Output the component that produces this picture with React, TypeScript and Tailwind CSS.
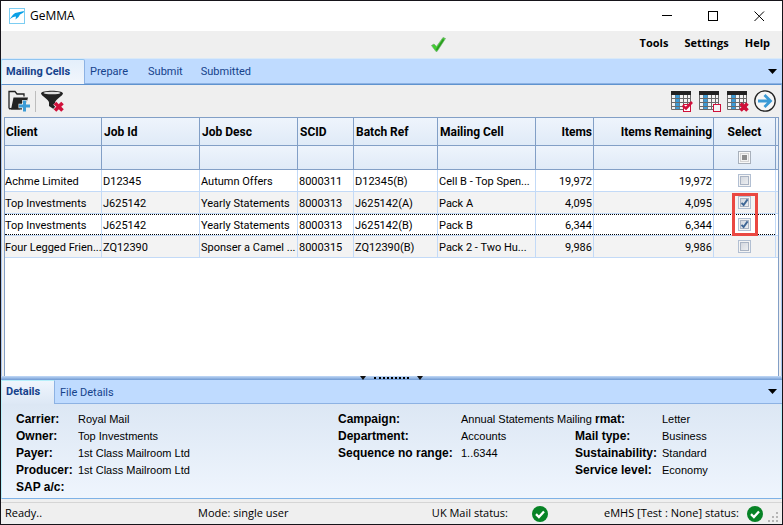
import React, { useState } from "react";

type Row = {
  client: string;
  jobId: string;
  desc: string;
  scid: string;
  batch: string;
  cell: string;
  items: string;
  remaining: string;
  selected: boolean;
};

const initialRows: Row[] = [
  { client: "Achme Limited", jobId: "D12345", desc: "Autumn Offers", scid: "8000311", batch: "D12345(B)", cell: "Cell B - Top Spen...", items: "19,972", remaining: "19,972", selected: false },
  { client: "Top Investments", jobId: "J625142", desc: "Yearly Statements", scid: "8000313", batch: "J625142(A)", cell: "Pack A", items: "4,095", remaining: "4,095", selected: true },
  { client: "Top Investments", jobId: "J625142", desc: "Yearly Statements", scid: "8000313", batch: "J625142(B)", cell: "Pack B", items: "6,344", remaining: "6,344", selected: true },
  { client: "Four Legged Frien...", jobId: "ZQ12390", desc: "Sponser a Camel ...", scid: "8000315", batch: "ZQ12390(B)", cell: "Pack 2 - Two Hu...", items: "9,986", remaining: "9,986", selected: false },
];

const columns = [
  { title: "Client", align: "text-left pl-px" },
  { title: "Job Id", align: "text-left pl-[2px]" },
  { title: "Job Desc", align: "text-left pl-[2px]" },
  { title: "SCID", align: "text-left pl-[2px]" },
  { title: "Batch Ref", align: "text-left pl-[2px]" },
  { title: "Mailing Cell", align: "text-left pl-[2px]" },
  { title: "Items", align: "text-right pr-px" },
  { title: "Items Remaining", align: "text-right pr-px" },
  { title: "Select", align: "text-center" },
];

const FOCUSED_ROW = 2;

function Tick({ className }: { className: string }) {
  return (
    <svg className={className} viewBox="0 0 13 13" fill="none" aria-hidden="true">
      <path d="M3.5 6.8 L5.6 9 L9.6 3.4" stroke="#3f6796" strokeWidth="1.9" />
    </svg>
  );
}

function GridCheck({ label, checked, onChange }: { label: string; checked: boolean; onChange: () => void }) {
  return (
    <span className="relative mx-auto block size-[13px]">
      <input
        type="checkbox"
        aria-label={label}
        checked={checked}
        onChange={onChange}
        className="block size-[13px] appearance-none border border-[#b2bfd2] bg-linear-to-br from-[#cdd2da] to-[#f3f4f6] shadow-[inset_0_0_0_1px_#f4f4f4,inset_0_0_0_2px_#a9b3c3]"
      />
      {checked && <Tick className="pointer-events-none absolute inset-0 size-[13px]" />}
    </span>
  );
}

function CalendarIcon({ mark }: { mark: "tick" | "box" | "cross" }) {
  return (
    <svg className="h-[22px] w-[23px]" viewBox="0 0 23 22" fill="none" aria-hidden="true">
      <rect x="0.5" y="1" width="20" height="19" fill="#f4f4f4" />
      <path d="M0.5 4V19.5H19.5V4M4.5 4V19M8.5 4V19M12.5 4V19M16.5 4V19M1 8.5H19M1 12.5H19M1 16.5H19" stroke="#6a6a6a" />
      <path d="M4.500 5h4v3h-4zM4.500 9h4v3h-4zM4.500 13h4v3h-4zM4.500 17h4v2h-4z" fill="#3c9bd6" />
      <rect x="0" y="1" width="20" height="4" fill="#222" />
      {mark === "tick" && (
        <>
          <rect x="12.5" y="14.5" width="7" height="7" fill="#fff" stroke="#d0103a" />
          <path d="M11.5 15.5L15 18.5L21 12" stroke="#d0103a" strokeWidth="2.6" />
        </>
      )}
      {mark === "box" && <rect x="14.5" y="14.5" width="7" height="7" fill="#f4f4f4" stroke="#d0103a" />}
      {mark === "cross" && <path d="M13.5 13.5L20.5 20.5M20.5 13.5L13.5 20.5" stroke="#d0103a" strokeWidth="3.6" />}
    </svg>
  );
}

function StatusOk() {
  return (
    <svg className="size-4 shrink-0" viewBox="0 0 16 16" fill="none" role="img" aria-label="OK">
      <circle cx="8" cy="8" r="8" fill="#078326" />
      <path d="M4 8.2L6.9 11L12 5.4" stroke="#fff" strokeWidth="2.3" />
    </svg>
  );
}

function TabMenuButton({ label }: { label: string }) {
  return (
    <button type="button" aria-label={label} className="mr-[5px] ml-auto self-center">
      <svg className="h-[5px] w-[9px]" viewBox="0 0 9 5" aria-hidden="true">
        <path d="M0 0H9L4.5 5Z" fill="#000" />
      </svg>
    </button>
  );
}

function Label({ children }: { children: React.ReactNode }) {
  return <dt className="text-[12px] font-bold leading-[17px]">{children}</dt>;
}

function Value({ children }: { children?: React.ReactNode }) {
  return <dd>{children}</dd>;
}

export default function App() {
  const [rows, setRows] = useState(initialRows);
  const toggle = (index: number) =>
    setRows(rows.map((row, i) => (i === index ? { ...row, selected: !row.selected } : row)));

  return (
    <div className="flex min-h-screen flex-col border border-[#16141a] bg-[#efefef] font-['Roboto',Arial,sans-serif] text-[11px] text-black">
      <header className="flex h-[30px] items-center bg-white pl-2 font-['Open_Sans','Segoe_UI',sans-serif]">
        <svg className="size-4" viewBox="0 0 16 16" aria-hidden="true">
          <rect x="0.5" y="0.5" width="15" height="15" fill="#fff" stroke="#7ccdf2" />
          <path d="M0.5 11.500C3.500 7.500 5 4.500 8.500 4.500L15 3L14.500 4.500L11 6.500L9.500 9L6.500 11.500L7 8.500C5 8.500 2.500 9.500 0.500 11.500Z" fill="#0aa0e6" />
        </svg>
        <h1 className="ml-[5px] text-[12px]">GeMMA</h1>
        <div className="ml-auto flex">
          <button type="button" aria-label="Minimise" className="flex h-[30px] w-[45px] items-center justify-center">
            <svg className="size-[11px]" viewBox="0 0 11 11" stroke="#000" aria-hidden="true"><path d="M0 4.500H10" /></svg>
          </button>
          <button type="button" aria-label="Maximise" className="flex h-[30px] w-[46px] items-center justify-center">
            <svg className="size-[11px]" viewBox="0 0 11 11" fill="none" stroke="#000" aria-hidden="true"><rect x="0.5" y="0.5" width="9" height="9" /></svg>
          </button>
          <button type="button" aria-label="Close" className="flex h-[30px] w-[46px] items-center justify-center">
            <svg className="size-[11px]" viewBox="0 0 11 11" stroke="#000" aria-hidden="true"><path d="M0.500 0.500L10 10M10 0.500L0.500 10" /></svg>
          </button>
        </div>
      </header>

      <div className="flex h-[27px] items-center font-['Open_Sans','Segoe_UI',sans-serif] text-[11px] font-bold">
        <div className="flex flex-1 justify-end pr-[194px]">
          <svg className="size-[15px]" viewBox="0 0 15 15" fill="none" aria-hidden="true">
            <path d="M0.500 8.500L3 7L5.500 9.500L12 0.500L14.500 1.500L6 14.500H5Z" fill="#41cf30" stroke="#74a874" strokeWidth="0.700" />
            <path d="M5.500 13L12.500 2.500" stroke="#2a9a20" strokeWidth="1.500" />
          </svg>
        </div>
        <nav aria-label="Main" className="flex gap-4 pr-3 pb-[2px]">
          <button type="button">Tools</button>
          <button type="button">Settings</button>
          <button type="button">Help</button>
        </nav>
      </div>

      <div className="flex h-[26px] border-t border-[#d9e9f8] bg-[#bfdbff] text-[#15428b]">
        <div role="tablist" className="flex flex-1 items-stretch border-b border-[#8db2e3]">
          <button type="button" role="tab" aria-selected="true" className="-mb-px w-[84px] rounded-t-xs border-t border-r border-l border-t-[#8fc4f0] border-r-[#8db2e3] border-l-[#a9e7f7] bg-linear-to-b from-[#e4effb] to-[#f2f6fc] pl-1 text-left font-bold">
            Mailing Cells
          </button>
          <button type="button" role="tab" aria-selected="false" className="ml-[5px] pt-[2px]">Prepare</button>
          <button type="button" role="tab" aria-selected="false" className="ml-5 pt-[2px]">Submit</button>
          <button type="button" role="tab" aria-selected="false" className="ml-[18px] pt-[2px]">Submitted</button>
          <TabMenuButton label="Tab list" />
        </div>
      </div>

      <main className="flex flex-1 flex-col border-x border-t border-x-[#a7c5ee] border-t-[#5f93cf]">
        <div className="flex h-[32px] items-center pr-[5px] pl-[6px]">
          <button type="button" aria-label="Add to folder">
            <svg className="h-[22px] w-[23px]" viewBox="0 0 23 22" fill="none" aria-hidden="true">
              <path d="M1 18.500V1.500H7L9 4H16V6.500" stroke="#222" strokeWidth="1.300" />
              <path d="M3 19.500L5.500 7.500H20L18.500 13H14V19.500Z" fill="#222" />
              <path d="M1 18.700H12" stroke="#222" strokeWidth="1.500" />
              <path d="M16.500 10V22M10.500 16H22.500" stroke="#efefef" strokeWidth="4.600" />
              <path d="M16.500 10.500V21.500M11 16H22" stroke="#3c9bd6" strokeWidth="3" />
            </svg>
          </button>
          <span className="mr-[5px] ml-1 h-[21px] w-px bg-[#bdbdbd]" />
          <button type="button" aria-label="Clear filter">
            <svg className="h-[22px] w-[23px]" viewBox="0 0 23 22" fill="none" aria-hidden="true">
              <path d="M0 3.500C0 -0.200 22 -0.200 22 3.500C22 5.500 14 10 14 12.500V20L8 16V12.500C8 10 0 5.500 0 3.500Z" fill="#222" />
              <ellipse cx="11" cy="3" rx="8.500" ry="1.300" fill="#dedede" />
              <path d="M14 13L21.500 20.500M21.500 13L14 20.500" stroke="#efefef" strokeWidth="5" />
              <path d="M14 13L21.500 20.500M21.500 13L14 20.500" stroke="#d0103a" strokeWidth="3.600" />
            </svg>
          </button>
          <div className="ml-auto flex items-center gap-[5px]">
            <button type="button" aria-label="Select all"><CalendarIcon mark="tick" /></button>
            <button type="button" aria-label="Deselect all"><CalendarIcon mark="box" /></button>
            <button type="button" aria-label="Remove selected"><CalendarIcon mark="cross" /></button>
            <button type="button" aria-label="Next" className="-ml-px">
              <svg className="size-[22px]" viewBox="0 0 22 22" fill="none" aria-hidden="true">
                <circle cx="11" cy="11" r="10.200" fill="#f7f7f7" stroke="#222" strokeWidth="1.300" />
                <path d="M4 11H16M10.500 5L16.500 11L10.500 17" stroke="#3c9bd6" strokeWidth="2.800" />
              </svg>
            </button>
          </div>
        </div>

        <div className="mx-[2px] min-h-[200px] flex-1 border-x border-t border-[#829fc6] bg-white">
          <table className="w-full table-fixed border-separate border-spacing-0">
            <colgroup>
              <col className="w-[97px]" />
              <col className="w-[98px]" />
              <col className="w-[98px]" />
              <col className="w-[56px]" />
              <col className="w-[84px]" />
              <col className="w-[98px]" />
              <col className="w-[58px]" />
              <col className="w-[120px]" />
              <col className="w-[62px]" />
              <col />
            </colgroup>
            <thead>
              <tr className="h-[28px] bg-linear-to-b from-[#eef4fc] to-[#dfeaf7]">
                {columns.map((column) => (
                  <th key={column.title} scope="col" className={"border-r border-b border-[#829fc6] p-0 text-[12px] font-bold " + column.align}>
                    {column.title}
                  </th>
                ))}
                <td className="border-b border-[#829fc6] p-0" />
              </tr>
              <tr className="h-[24px] bg-linear-to-b from-[#eef4fc] to-[#dfeaf7]">
                {columns.map((column) => (
                  <td key={column.title} className="border-r border-b border-[#829fc6] p-0">
                    {column.title === "Select" && (
                      <input
                        type="checkbox"
                        aria-label="Filter by selection"
                        className="mx-auto block size-[13px] appearance-none border border-[#a8b0bb] bg-[#8d8d8d] shadow-[inset_0_0_0_1px_#f8f8f8,inset_0_0_0_2px_#d4d4d4,inset_0_0_0_3px_#f4f4f4]"
                      />
                    )}
                  </td>
                ))}
                <td className="border-b border-[#829fc6] p-0" />
              </tr>
            </thead>
            <tbody>
              {rows.map((row, index) => {
                const inner =
                  "flex h-[21px] items-center whitespace-nowrap " +
                  (index === FOCUSED_ROW ? "border-y border-dotted border-black " : "border-y border-transparent ");
                const cell = "border-r border-b border-[#c3daf7] p-0 ";
                return (
                  <tr key={row.batch} className={index % 2 === 1 ? "bg-[#f3f3f3]" : "bg-white"}>
                    {[row.client, row.jobId, row.desc, row.scid, row.batch, row.cell].map((text, i) => (
                      <td key={i} className={cell}>
                        <div className={inner + "pt-[4px] " + (i > 0 ? "pl-px" : "")}>{text}</div>
                      </td>
                    ))}
                    {[row.items, row.remaining].map((text, i) => (
                      <td key={i} className={cell}>
                        <div className={inner + "justify-end pt-[4px] pr-px"}>{text}</div>
                      </td>
                    ))}
                    <td className={cell + "relative"}>
                      <div className={inner}>
                        <GridCheck label={"Select " + row.batch} checked={row.selected} onChange={() => toggle(index)} />
                      </div>
                      {index === 1 && (
                        <span className="pointer-events-none absolute top-px left-1/2 z-10 h-[43px] w-[26px] -translate-x-1/2 border-[3px] border-[#ea4842]" />
                      )}
                    </td>
                    <td className="border-b border-[#c3daf7] p-0" />
                  </tr>
                );
              })}
            </tbody>
          </table>
        </div>
      </main>

      <div className="flex h-[4px] items-center justify-center gap-2 bg-linear-to-b from-[#c3daf7] to-[#6f9ad3]">
        <svg className="h-[4px] w-[6px]" viewBox="0 0 6 4" aria-hidden="true"><path d="M0 0H6L3 4Z" fill="#111" /></svg>
        <span className="w-[35px] border-t-2 border-dotted border-black" />
        <svg className="h-[4px] w-[6px]" viewBox="0 0 6 4" aria-hidden="true"><path d="M0 0H6L3 4Z" fill="#111" /></svg>
      </div>

      <section>
        <div role="tablist" className="flex h-[24px] border-b border-[#8db2e3] bg-[#bfdbff] text-[#15428b]">
          <button type="button" role="tab" aria-selected="true" className="-mb-px w-[54px] border-t border-r border-l border-t-[#b6effa] border-r-[#8db2e3] border-l-[#b6effa] bg-linear-to-b from-[#eff5fd] to-[#dde8f5] pl-1 text-left font-bold">
            Details
          </button>
          <button type="button" role="tab" aria-selected="false" className="ml-[5px] pt-[3px]">File Details</button>
          <TabMenuButton label="Detail tab list" />
        </div>
        <div className="flex h-[95px] border-x border-b border-x-[#b6effa] border-b-[#7fb2e6] bg-linear-to-b from-[#dce7f4] to-[#eff5fd] pt-[7px] pl-[14px] font-['Liberation_Sans',Arial,sans-serif] leading-[17px]">
          <dl className="grid flex-1 auto-rows-[17px] grid-cols-[62px_1fr] content-start">
            <Label>Carrier:</Label><Value>Royal Mail</Value>
            <Label>Owner:</Label><Value>Top Investments</Value>
            <Label>Payer:</Label><Value>1st Class Mailroom Ltd</Value>
            <Label>Producer:</Label><Value>1st Class Mailroom Ltd</Value>
            <Label>SAP a/c:</Label><Value />
          </dl>
          <dl className="grid w-[237px] auto-rows-[17px] grid-cols-[123px_114px] content-start whitespace-nowrap">
            <Label>Campaign:</Label><Value>Annual Statements Mailing</Value>
            <Label>Department:</Label><Value>Accounts</Value>
            <Label>Sequence no range:</Label><Value>1..6344</Value>
          </dl>
          <dl className="grid w-[206px] auto-rows-[17px] grid-cols-[87px_1fr] content-start">
            <Label><span className="pl-5">rmat:</span></Label><Value>Letter</Value>
            <Label>Mail type:</Label><Value>Business</Value>
            <Label>Sustainability:</Label><Value>Standard</Value>
            <Label>Service level:</Label><Value>Economy</Value>
          </dl>
        </div>
      </section>

      <footer className="mt-[3px] flex h-[22px] items-center border-t border-[#d5d5d5] pr-[3px] pl-1 font-['Open_Sans','Segoe_UI',sans-serif] text-[11px]">
        <span className="w-[193px]">Ready..</span>
        <span className="flex-1">Mode: single user</span>
        <span className="mr-6">UK Mail status:</span>
        <StatusOk />
        <span className="mr-2 ml-14">eMHS [Test : None] status:</span>
        <StatusOk />
        <svg className="ml-[4px] size-[12px] self-end" viewBox="0 0 12 12" fill="#b5b5b5" aria-hidden="true">
          <path d="M9 0h2v2h-2zM9 4h2v2h-2zM9 8h2v2h-2zM5 4h2v2h-2zM5 8h2v2h-2zM1 8h2v2h-2z" />
        </svg>
      </footer>
    </div>
  );
}
